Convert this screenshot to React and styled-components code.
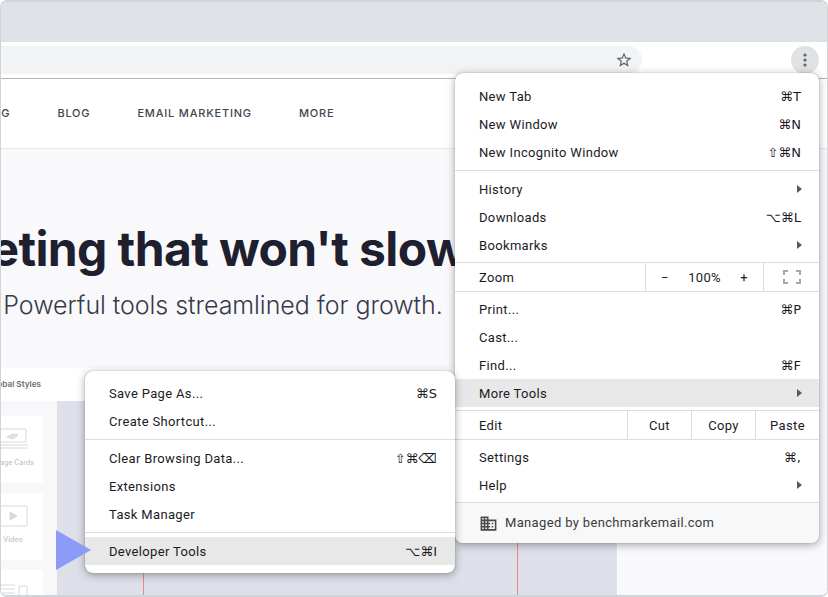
import React from "react";
import styled, { createGlobalStyle } from "styled-components";

const Global = createGlobalStyle`
  html, body { margin: 0; padding: 0; background: #fff; }
  #root { width: 828px; height: 597px; }
`;

const Win = styled.div`
  position: relative;
  box-sizing: border-box;
  width: 828px;
  height: 597px;
  border: 2px solid #d0d3d8;
  border-right-width: 1px;
  border-left-width: 1px;
  border-radius: 7px;
  overflow: hidden;
  display: flex;
  flex-direction: column;
  background: #fff;
`;
const TabStrip = styled.div`
  height: 40px;
  flex: none;
  background: #dee1e6;
`;
const Toolbar = styled.div`
  height: 36px;
  flex: none;
  box-sizing: border-box;
  background: #fff;
  display: flex;
  align-items: center;
  padding: 0 8px 0 0;
  justify-content: space-between;
`;
const Omnibox = styled.div`
  width: 641px;
  height: 28px;
  background: #f1f3f4;
  border-radius: 0 14px 14px 0;
  display: flex;
  align-items: center;
  justify-content: flex-end;
  padding-right: 9px;
  box-sizing: border-box;
`;
const MenuButton = styled.div`
  width: 28px;
  height: 28px;
  border-radius: 50%;
  background: #e1e2e3;
  display: flex;
  align-items: center;
  justify-content: center;
`;
const Page = styled.div`
  flex: 1;
  min-height: 0;
  border-top: 1px solid #b4b4b4;
  display: flex;
  flex-direction: column;
  overflow: hidden;
  background: #f9f9fc;
`;
const Nav = styled.nav`
  height: 70px;
  flex: none;
  box-sizing: border-box;
  background: #fff;
  border-bottom: 1px solid #e8e8ea;
  display: flex;
  align-items: center;
  gap: 47px;
  padding-bottom: 1px;
  overflow: hidden;
`;
const NavLink = styled.span`
  font: 500 11px/14px Inter, "Liberation Sans", sans-serif;
  letter-spacing: 0.8px;
  color: #42444f;
  white-space: nowrap;
  &:first-child { margin-left: -41px; }
`;
const Hero = styled.div`
  height: 219px;
  flex: none;
  width: 446px;
  display: flex;
  flex-direction: column;
  align-items: center;
  padding-top: 71px;
  box-sizing: border-box;
`;
const Heading = styled.h1`
  margin: 0 0 0 -8px;
  font: 700 48px/58px Inter, "Liberation Sans", sans-serif;
  letter-spacing: -0.6px;
  color: #1e2030;
  white-space: nowrap;
`;
const Subtitle = styled.p`
  margin: 11px 0 0 -2px;
  font: 300 25px/32px Inter, "Liberation Sans", sans-serif;
  letter-spacing: -0.05px;
  color: #363a4a;
  white-space: nowrap;
`;
const Builder = styled.div`
  flex: 1;
  min-height: 0;
  display: flex;
`;
const BuilderMain = styled.div`
  width: 616px;
  flex: none;
  display: flex;
  flex-direction: column;
  border-right: 1px solid #fff;
`;
const BuilderBar = styled.div`
  height: 33px;
  flex: none;
  box-sizing: border-box;
  padding-bottom: 2px;
  background: #fff;
  display: flex;
  align-items: center;
  font: 600 8.2px/10px Inter, "Liberation Sans", sans-serif;
  color: #6a6d78;
  white-space: nowrap;
  span { margin-left: -12px; }
`;
const BuilderBody = styled.div`
  flex: 1;
  display: flex;
  min-height: 0;
`;
const Sidebar = styled.div`
  width: 56px;
  flex: none;
  background: #f8f8fb;
  display: flex;
  flex-direction: column;
  gap: 10px;
  padding-top: 15px;
  box-sizing: border-box;
  overflow: hidden;
`;
const BlockCard = styled.div`
  width: 60px;
  height: 67px;
  flex: none;
  margin-left: -18px;
  background: #fff;
  border-radius: 3px;
  display: flex;
  flex-direction: column;
  align-items: center;
  padding-top: 12px;
  box-sizing: border-box;
  gap: 8px;
  font: 500 7px/9px Inter, "Liberation Sans", sans-serif;
  color: #c4c6cc;
  white-space: nowrap;
`;
const Canvas = styled.div`
  flex: 1;
  background: #dde0e9;
  padding-left: 86px;
  display: flex;
`;
const Guide = styled.div`
  width: 373px;
  border-left: 1px solid #ea8a86;
  border-right: 1px solid #ea8a86;
`;
const Aside = styled.div`
  flex: 1;
`;
const Menu = styled.div`
  position: absolute;
  box-sizing: border-box;
  left: 454px;
  top: 71px;
  width: 364px;
  height: 470px;
  background: #fff;
  border-radius: 8px;
  overflow: hidden;
  box-shadow: 0 0 1px rgba(0,0,0,.45), 0 2px 8px rgba(0,0,0,.35);
  z-index: 1;
  padding-top: 9px;
`;
const SubMenu = styled(Menu)`
  left: 84px;
  top: 369px;
  width: 370px;
  height: 202px;
  z-index: 2;
  padding-top: 8px;
`;
const Row = styled.div`
  height: 28px;
  box-sizing: border-box;
  display: flex;
  align-items: center;
  justify-content: space-between;
  padding: 2px 15px 0 24px;
  font: 400 13px/16px Roboto, "Liberation Sans", sans-serif;
  letter-spacing: 0.34px;
  color: #1b1b1f;
  background: ${p => (p.$active ? "#e8e8e8" : "transparent")};
`;
const Keys = styled.span`
  font: 400 13px/16px "DejaVu Sans", sans-serif;
  letter-spacing: 0;
  color: #1b1b1f;
  margin-right: 3px;
`;
const Caret = styled.span`
  width: 0;
  height: 0;
  border-left: 5px solid #5a5a5a;
  border-top: 4px solid transparent;
  border-bottom: 4px solid transparent;
  margin: -2px 2px 0 0;
`;
const Sep = styled.div`
  height: 1px;
  background: #dcdcdc;
  margin: ${p => p.$m || "4px 0"};
`;
const SplitRow = styled.div`
  height: 28px;
  display: flex;
  align-items: stretch;
  font: 400 13px/24px Roboto, "Liberation Sans", sans-serif;
  letter-spacing: 0.34px;
  color: #1b1b1f;
`;
const SplitLabel = styled.div`
  flex: 1;
  padding: 2px 0 0 24px;
  line-height: 26px;
`;
const Cell = styled.div`
  width: ${p => p.$w}px;
  box-sizing: border-box;
  flex: none;
  border-left: 1px solid #dcdcdc;
  display: flex;
  align-items: center;
  justify-content: ${p => p.$justify || "center"};
  padding: ${p => p.$pad || "2px 0 0"};
`;
const Footer = styled.div`
  height: 40px;
  background: #f8f8f8;
  display: flex;
  align-items: center;
  gap: 7px;
  padding-left: 24px;
  font: 400 13px/16px Roboto, "Liberation Sans", sans-serif;
  letter-spacing: 0.34px;
  color: #3a3a3e;
`;
const Pointer = styled.div`
  position: absolute;
  left: 55px;
  top: 528px;
  width: 0;
  height: 0;
  border-left: 35px solid #8c9bf5;
  border-top: 20.5px solid transparent;
  border-bottom: 20.5px solid transparent;
  z-index: 3;
`;

const Star = () => (
  <svg width="18" height="18" viewBox="0 0 24 24" fill="#5f6368">
    <path d="M22 9.24l-7.19-.62L12 2 9.19 8.63 2 9.24l5.46 4.73L5.82 21 12 17.27 18.18 21l-1.63-7.03L22 9.24zM12 15.4l-3.76 2.27 1-4.28-3.32-2.88 4.38-.38L12 6.1l1.71 4.04 4.38.38-3.32 2.88 1 4.28L12 15.4z" />
  </svg>
);
const Dots = () => (
  <svg width="4" height="14" viewBox="0 0 4 14" fill="#5f6368">
    <circle cx="2" cy="2" r="1.6" />
    <circle cx="2" cy="7" r="1.6" />
    <circle cx="2" cy="12" r="1.6" />
  </svg>
);
const Domain = () => (
  <svg width="19" height="19" viewBox="0 0 24 24" fill="#4a4a4e">
    <path d="M12 7V3H2v18h20V7H12zM6 19H4v-2h2v2zm0-4H4v-2h2v2zm0-4H4V9h2v2zm0-4H4V5h2v2zm4 12H8v-2h2v2zm0-4H8v-2h2v2zm0-4H8V9h2v2zm0-4H8V5h2v2zm10 12h-8v-2h2v-2h-2v-2h2v-2h-2V9h8v10zm-2-8h-2v2h2v-2zm0 4h-2v2h2v-2z" />
  </svg>
);
const Fullscreen = () => (
  <svg width="18" height="14" viewBox="0 0 18 14" fill="none" stroke="#a8a8a8" strokeWidth="2">
    <path d="M1 5V1h4M13 1h4v4M17 9v4h-4M5 13H1V9" />
  </svg>
);
const CardIcon = () => (
  <svg width="38" height="22" viewBox="0 0 38 22" fill="none" stroke="#d6d8dd">
    <rect x="6" y="1" width="26" height="13" rx="1" />
    <path d="M13 9l6-3 5 1-5 4z" fill="#dfe1e5" />
    <path d="M4 17h30M4 20h30" />
  </svg>
);
const PlayIcon = () => (
  <svg width="36" height="22" viewBox="0 0 36 22" fill="none" stroke="#d6d8dd">
    <rect x="4" y="1" width="28" height="20" rx="1" />
    <path d="M15 7l7 4-7 4z" fill="#d6d8dd" />
  </svg>
);
const ColumnsIcon = () => (
  <svg width="36" height="22" viewBox="0 0 36 22" fill="none" stroke="#d6d8dd">
    <path d="M2 3h18M2 7h18M2 11h18M2 15h18M2 19h18" />
    <path d="M24 4h8v16h-8z" />
  </svg>
);

export default function App() {
  return (
    <>
      <Global />
      <Win>
        <TabStrip />
        <Toolbar>
          <Omnibox><Star /></Omnibox>
          <MenuButton><Dots /></MenuButton>
        </Toolbar>
        <Page>
          <Nav>
            <NavLink>PRICING</NavLink>
            <NavLink>BLOG</NavLink>
            <NavLink>EMAIL MARKETING</NavLink>
            <NavLink>MORE</NavLink>
          </Nav>
          <Hero>
            <Heading>Email marketing that won't slow you down</Heading>
            <Subtitle>Powerful tools streamlined for growth.</Subtitle>
          </Hero>
          <Builder>
            <BuilderMain>
              <BuilderBar><span>Global Styles</span></BuilderBar>
              <BuilderBody>
                <Sidebar>
                  <BlockCard><CardIcon />Image Cards</BlockCard>
                  <BlockCard><PlayIcon />Video</BlockCard>
                  <BlockCard><ColumnsIcon /></BlockCard>
                </Sidebar>
                <Canvas><Guide /></Canvas>
              </BuilderBody>
            </BuilderMain>
            <Aside />
          </Builder>
        </Page>
        <Pointer />
        <SubMenu>
          <Row>Save Page As...<Keys>⌘S</Keys></Row>
          <Row>Create Shortcut...</Row>
          <Sep />
          <Row>Clear Browsing Data...<Keys>⇧⌘⌫</Keys></Row>
          <Row>Extensions</Row>
          <Row>Task Manager</Row>
          <Sep />
          <Row $active>Developer Tools<Keys>⌥⌘I</Keys></Row>
        </SubMenu>
        <Menu>
          <Row>New Tab<Keys>⌘T</Keys></Row>
          <Row>New Window<Keys>⌘N</Keys></Row>
          <Row>New Incognito Window<Keys>⇧⌘N</Keys></Row>
          <Sep />
          <Row>History<Caret /></Row>
          <Row>Downloads<Keys>⌥⌘L</Keys></Row>
          <Row>Bookmarks<Caret /></Row>
          <Sep $m="3px 0 0" />
          <SplitRow>
            <SplitLabel>Zoom</SplitLabel>
            <Cell $w={118} $justify="space-between" $pad="2px 15px 0">
              <span>−</span><span>100%</span><span>+</span>
            </Cell>
            <Cell $w={56} $pad="0"><Fullscreen /></Cell>
          </SplitRow>
          <Sep $m="0 0 3px" />
          <Row>Print...<Keys>⌘P</Keys></Row>
          <Row>Cast...</Row>
          <Row>Find...<Keys>⌘F</Keys></Row>
          <Row $active>More Tools<Caret /></Row>
          <Sep $m="3px 0 0" />
          <SplitRow>
            <SplitLabel>Edit</SplitLabel>
            <Cell $w={64}>Cut</Cell>
            <Cell $w={64}>Copy</Cell>
            <Cell $w={64}>Paste</Cell>
          </SplitRow>
          <Sep $m="0 0 3px" />
          <Row>Settings<Keys>⌘,</Keys></Row>
          <Row>Help<Caret /></Row>
          <Sep $m="3px 0 0" />
          <Footer><Domain />Managed by benchmarkemail.com</Footer>
        </Menu>
      </Win>
    </>
  );
}
